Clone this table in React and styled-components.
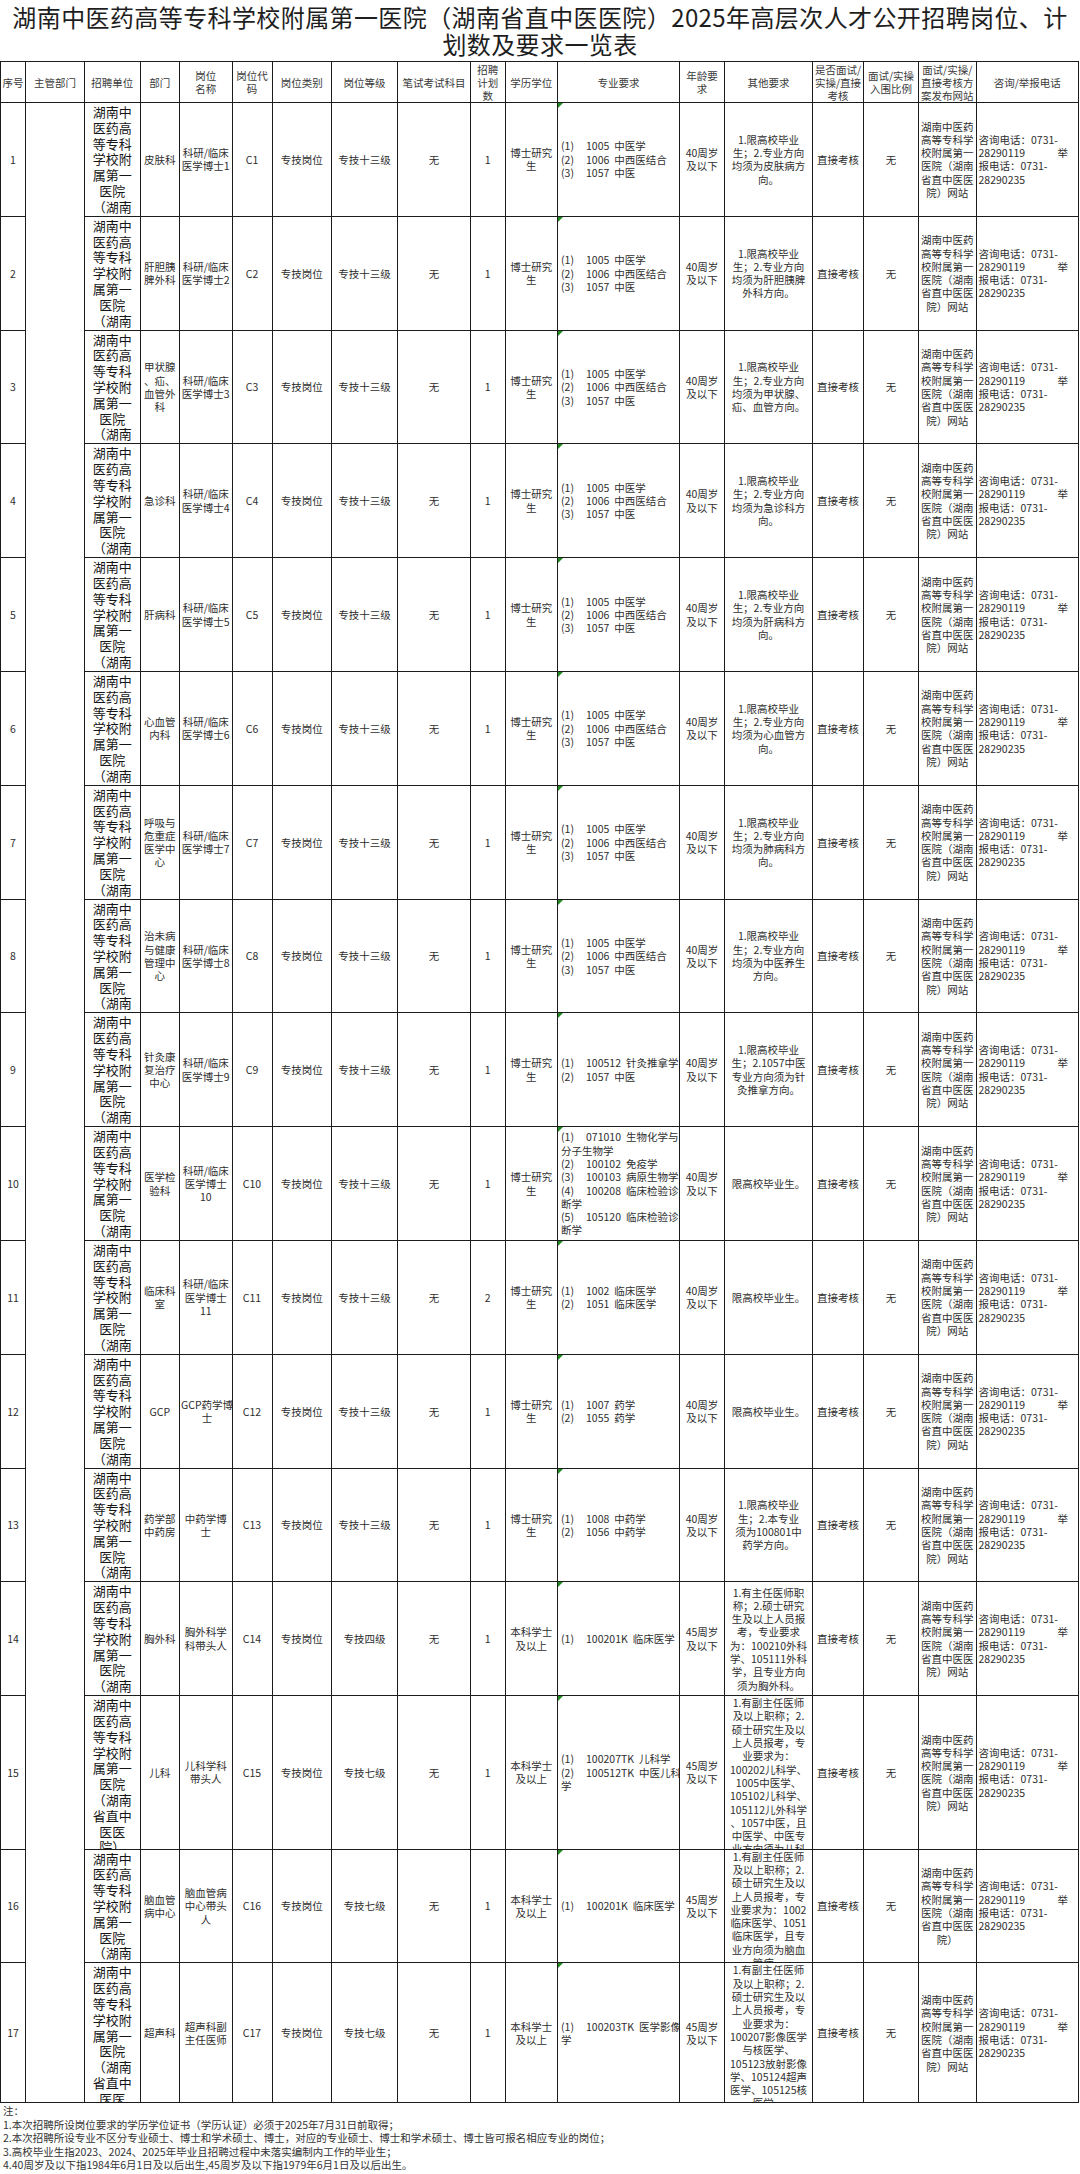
import styled, { createGlobalStyle } from 'styled-components';

const GlobalStyle = createGlobalStyle`
  html, body {
    margin: 0;
    padding: 0;
    background: #ffffff;
  }
  body {
    font-family: "Noto Sans CJK SC", "Noto Sans", sans-serif;
    color: #2a2a2a;
  }
`;

const COLS = [25, 59, 55.5, 39.5, 52.5, 40, 59.5, 66, 73, 34.5, 52.5, 122, 45, 88, 51, 55, 57.5, 102.5];
const ROWS = [113.8, 113.8, 113.8, 113.8, 113.8, 113.8, 113.8, 113.8, 113.8, 113.8, 113.8, 113.8, 113.8, 113.8, 153.5, 113.8, 140];

const Page = styled.div`
  width: 1080px;
`;

const Title = styled.h1`
  margin: 0;
  padding-top: 3px;
  width: 1080px;
  text-align: center;
  font-weight: 400;
  font-size: 24px;
  letter-spacing: 0.4px;
  line-height: 27px;
  color: #1e1e1e;
  margin-bottom: 4px;
  & span {
    display: block;
    white-space: nowrap;
  }
`;

const Grid = styled.div`
  display: grid;
  width: fit-content;
  grid-template-columns: ${COLS.map((w) => `${w}px`).join(' ')};
  grid-template-rows: 41px ${ROWS.map((h) => `${h}px`).join(' ')};
  border-top: 1px solid #1c1c1c;
  border-left: 1px solid #1c1c1c;
`;

const Cell = styled.div`
  position: relative;
  box-sizing: border-box;
  border-right: 1px solid #1c1c1c;
  border-bottom: 1px solid #1c1c1c;
  overflow: hidden;
  display: flex;
  flex-direction: column;
  padding: ${(p) => p.$pad || '0 1px'};
  font-size: 10.5px;
  line-height: 13.3px;
  text-align: center;
  color: #2e2e2e;
`;

const HeadCell = styled(Cell)`
  line-height: 13px;
  color: #3a3a3a;
`;

const SpanCell = styled(Cell)`
  grid-column: 2;
  grid-row: 2 / span 17;
`;

const MajorCell = styled(Cell)`
  padding: 0 2px 0 3px;
  &::before {
    content: '';
    position: absolute;
    left: 0;
    top: 0;
    border-top: 5px solid #1f8a1f;
    border-right: 5px solid transparent;
  }
`;

const Content = styled.div`
  margin: auto ${(p) => (p.$left ? '0' : 'auto')};
  text-align: ${(p) => (p.$left ? 'left' : 'center')};
  width: ${(p) => (p.$left ? '100%' : 'auto')};
  & > div {
    white-space: nowrap;
  }
`;

const UnitText = styled.div`
  padding: 1px 5px 0;
  font-size: 13px;
  line-height: 15.8px;
  color: #151515;
  text-align: center;
`;

const Label = styled.span`
  display: inline-block;
  width: 25px;
`;

const Code = styled.span`
  margin-right: 5px;
`;

const ContactLine = styled.div`
  display: flex;
  justify-content: space-between;
  padding-right: ${(p) => (p.$pad ? '10px' : '0')};
`;

const Notes = styled.div`
  padding: 1px 0 0 3px;
  font-size: 10.5px;
  line-height: 13.4px;
  color: #333;
  & p {
    margin: 0;
    white-space: nowrap;
  }
`;

const HEADS = [
  ['序号'],
  ['主管部门'],
  ['招聘单位'],
  ['部门'],
  ['岗位', '名称'],
  ['岗位代', '码'],
  ['岗位类别'],
  ['岗位等级'],
  ['笔试考试科目'],
  ['招聘', '计划', '数'],
  ['学历学位'],
  ['专业要求'],
  ['年龄要', '求'],
  ['其他要求'],
  ['是否面试/', '实操/直接', '考核'],
  ['面试/实操', '入围比例'],
  ['面试/实操/', '直接考核方', '案发布网站'],
  ['咨询/举报电话'],
];

const UNIT = '湖南中医药高等专科学校附属第一医院（湖南省直中医医院）';
const SITE = ['湖南中医药', '高等专科学', '校附属第一', '医院（湖南', '省直中医医', '院）网站'];
const SITE_SHORT = ['湖南中医药', '高等专科学', '校附属第一', '医院（湖南', '省直中医医', '院）'];

const TCM = [
  { l: '(1)', c: '1005', t: '中医学' },
  { l: '(2)', c: '1006', t: '中西医结合' },
  { l: '(3)', c: '1057', t: '中医' },
];

const dr = (n) => ['科研/临床', `医学博士${n}`];
const limit = (dir) => ['1.限高校毕业', '生；2.专业方向', ...dir];
const PHD = ['博士研究', '生'];
const BACH = ['本科学士', '及以上'];
const AGE40 = ['40周岁', '及以下'];
const AGE45 = ['45周岁', '及以下'];

const DATA = [
  { dept: ['皮肤科'], pos: dr(1), grade: '专技十三级', plan: '1', edu: PHD, majors: TCM, age: AGE40, other: limit(['均须为皮肤病方', '向。']) },
  { dept: ['肝胆胰', '脾外科'], pos: dr(2), grade: '专技十三级', plan: '1', edu: PHD, majors: TCM, age: AGE40, other: limit(['均须为肝胆胰脾', '外科方向。']) },
  { dept: ['甲状腺', '、疝、', '血管外', '科'], pos: dr(3), grade: '专技十三级', plan: '1', edu: PHD, majors: TCM, age: AGE40, other: limit(['均须为甲状腺、', '疝、血管方向。']) },
  { dept: ['急诊科'], pos: dr(4), grade: '专技十三级', plan: '1', edu: PHD, majors: TCM, age: AGE40, other: limit(['均须为急诊科方', '向。']) },
  { dept: ['肝病科'], pos: dr(5), grade: '专技十三级', plan: '1', edu: PHD, majors: TCM, age: AGE40, other: limit(['均须为肝病科方', '向。']) },
  { dept: ['心血管', '内科'], pos: dr(6), grade: '专技十三级', plan: '1', edu: PHD, majors: TCM, age: AGE40, other: limit(['均须为心血管方', '向。']) },
  { dept: ['呼吸与', '危重症', '医学中', '心'], pos: dr(7), grade: '专技十三级', plan: '1', edu: PHD, majors: TCM, age: AGE40, other: limit(['均须为肺病科方', '向。']) },
  { dept: ['治未病', '与健康', '管理中', '心'], pos: dr(8), grade: '专技十三级', plan: '1', edu: PHD, majors: TCM, age: AGE40, other: limit(['均须为中医养生', '方向。']) },
  {
    dept: ['针灸康', '复治疗', '中心'], pos: dr(9), grade: '专技十三级', plan: '1', edu: PHD, age: AGE40,
    majors: [{ l: '(1)', c: '100512', t: '针灸推拿学' }, { l: '(2)', c: '1057', t: '中医' }],
    other: ['1.限高校毕业', '生；2.1057中医', '专业方向须为针', '灸推拿方向。'],
  },
  {
    dept: ['医学检', '验科'], pos: ['科研/临床', '医学博士', '10'], grade: '专技十三级', plan: '1', edu: PHD, age: AGE40,
    majors: [
      { l: '(1)', c: '071010', t: '生物化学与' }, '分子生物学',
      { l: '(2)', c: '100102', t: '免疫学' },
      { l: '(3)', c: '100103', t: '病原生物学' },
      { l: '(4)', c: '100208', t: '临床检验诊' }, '断学',
      { l: '(5)', c: '105120', t: '临床检验诊' }, '断学',
    ],
    other: ['限高校毕业生。'],
  },
  {
    dept: ['临床科', '室'], pos: ['科研/临床', '医学博士', '11'], grade: '专技十三级', plan: '2', edu: PHD, age: AGE40,
    majors: [{ l: '(1)', c: '1002', t: '临床医学' }, { l: '(2)', c: '1051', t: '临床医学' }],
    other: ['限高校毕业生。'],
  },
  {
    dept: ['GCP'], pos: ['GCP药学博', '士'], grade: '专技十三级', plan: '1', edu: PHD, age: AGE40,
    majors: [{ l: '(1)', c: '1007', t: '药学' }, { l: '(2)', c: '1055', t: '药学' }],
    other: ['限高校毕业生。'],
  },
  {
    dept: ['药学部', '中药房'], pos: ['中药学博', '士'], grade: '专技十三级', plan: '1', edu: PHD, age: AGE40,
    majors: [{ l: '(1)', c: '1008', t: '中药学' }, { l: '(2)', c: '1056', t: '中药学' }],
    other: ['1.限高校毕业', '生；2.本专业', '须为100801中', '药学方向。'],
  },
  {
    dept: ['胸外科'], pos: ['胸外科学', '科带头人'], grade: '专技四级', plan: '1', edu: BACH, age: AGE45,
    majors: [{ l: '(1)', c: '100201K', t: '临床医学' }],
    other: ['1.有主任医师职', '称；2.硕士研究', '生及以上人员报', '考，专业要求', '为：100210外科', '学、105111外科', '学，且专业方向', '须为胸外科。'],
  },
  {
    dept: ['儿科'], pos: ['儿科学科', '带头人'], grade: '专技七级', plan: '1', edu: BACH, age: AGE45,
    majors: [{ l: '(1)', c: '100207TK', t: '儿科学' }, { l: '(2)', c: '100512TK', t: '中医儿科' }, '学'],
    other: ['1.有副主任医师', '及以上职称；2.', '硕士研究生及以', '上人员报考，专', '业要求为：', '100202儿科学、', '1005中医学、', '105102儿科学、', '105112儿外科学', '、1057中医，且', '中医学、中医专', '业方向须为儿科', '方向。'],
  },
  {
    dept: ['脑血管', '病中心'], pos: ['脑血管病', '中心带头', '人'], grade: '专技七级', plan: '1', edu: BACH, age: AGE45,
    majors: [{ l: '(1)', c: '100201K', t: '临床医学' }],
    other: ['1.有副主任医师', '及以上职称；2.', '硕士研究生及以', '上人员报考，专', '业要求为：1002', '临床医学、1051', '临床医学，且专', '业方向须为脑血', '管病。'],
    site: SITE_SHORT,
  },
  {
    dept: ['超声科'], pos: ['超声科副', '主任医师'], grade: '专技七级', plan: '1', edu: BACH, age: AGE45,
    majors: [{ l: '(1)', c: '100203TK', t: '医学影像' }, '学'],
    other: ['1.有副主任医师', '及以上职称；2.', '硕士研究生及以', '上人员报考，专', '业要求为：', '100207影像医学', '与核医学、', '105123放射影像', '学、105124超声', '医学、105125核', '医学。'],
  },
];

const Lines = ({ lines, left }) => (
  <Content $left={left}>
    {lines.map((t, i) => (
      <div key={i}>{t}</div>
    ))}
  </Content>
);

const Majors = ({ items }) => (
  <Content $left>
    {items.map((m, i) =>
      typeof m === 'string' ? (
        <div key={i}>{m}</div>
      ) : (
        <div key={i}>
          <Label>{m.l}</Label>
          <Code>{m.c}</Code>
          {m.t}
        </div>
      )
    )}
  </Content>
);

const Contact = () => (
  <Content $left>
    <div>咨询电话：0731-</div>
    <ContactLine $pad>
      <span>28290119</span>
      <span>举</span>
    </ContactLine>
    <div>报电话：0731-</div>
    <div>28290235</div>
  </Content>
);

const Row = ({ n, r }) => (
  <>
    <Cell>
      <Lines lines={[String(n)]} />
    </Cell>
    <Cell>
      <UnitText>{UNIT}</UnitText>
    </Cell>
    <Cell>
      <Lines lines={r.dept} />
    </Cell>
    <Cell>
      <Lines lines={r.pos} />
    </Cell>
    <Cell>
      <Lines lines={[`C${n}`]} />
    </Cell>
    <Cell>
      <Lines lines={['专技岗位']} />
    </Cell>
    <Cell>
      <Lines lines={[r.grade]} />
    </Cell>
    <Cell>
      <Lines lines={['无']} />
    </Cell>
    <Cell>
      <Lines lines={[r.plan]} />
    </Cell>
    <Cell>
      <Lines lines={r.edu} />
    </Cell>
    <MajorCell>
      <Majors items={r.majors} />
    </MajorCell>
    <Cell>
      <Lines lines={r.age} />
    </Cell>
    <Cell>
      <Lines lines={r.other} />
    </Cell>
    <Cell>
      <Lines lines={['直接考核']} />
    </Cell>
    <Cell>
      <Lines lines={['无']} />
    </Cell>
    <Cell>
      <Lines lines={r.site || SITE} />
    </Cell>
    <Cell $pad="0 0 0 2px">
      <Contact />
    </Cell>
  </>
);

const App = () => (
  <Page>
    <GlobalStyle />
    <Title>
      <span>湖南中医药高等专科学校附属第一医院（湖南省直中医医院）2025年高层次人才公开招聘岗位、计</span>
      <span>划数及要求一览表</span>
    </Title>
    <Grid>
      {HEADS.map((h, i) => (
        <HeadCell key={`h${i}`}>
          <Lines lines={h} />
        </HeadCell>
      ))}
      <SpanCell />
      {DATA.map((r, i) => (
        <Row key={i} n={i + 1} r={r} />
      ))}
    </Grid>
    <Notes>
      <p>注：</p>
      <p>1.本次招聘所设岗位要求的学历学位证书（学历认证）必须于2025年7月31日前取得；</p>
      <p>2.本次招聘所设专业不区分专业硕士、博士和学术硕士、博士，对应的专业硕士、博士和学术硕士、博士皆可报名相应专业的岗位；</p>
      <p>3.高校毕业生指2023、2024、2025年毕业且招聘过程中未落实编制内工作的毕业生；</p>
      <p>4.40周岁及以下指1984年6月1日及以后出生,45周岁及以下指1979年6月1日及以后出生。</p>
    </Notes>
  </Page>
);

export default App;
